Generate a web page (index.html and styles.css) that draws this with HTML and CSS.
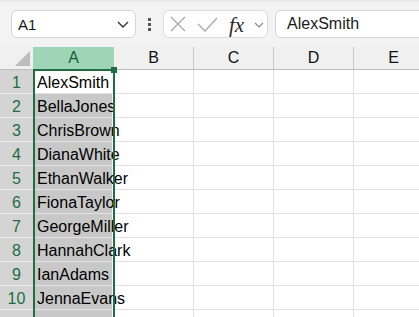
FILE: index.html
```html
<!DOCTYPE html>
<html>
<head>
<meta charset="utf-8">
<link rel="stylesheet" href="styles.css">
</head>
<body>
<div class="toolbar">
  <div class="namebox">
    <span class="nb-text">A1</span>
    <svg class="nb-chev" width="12" height="7" viewBox="0 0 12 7"><path d="M1 1 L6 6 L11 1" fill="none" stroke="#333" stroke-width="1.4"/></svg>
  </div>
  <div class="dots"><span></span><span></span><span></span></div>
  <div class="fbtns">
    <svg class="ic-x" width="16" height="16" viewBox="0 0 16 16"><path d="M1 1 L15 15 M15 1 L1 15" stroke="#ababab" stroke-width="1.4" fill="none"/></svg>
    <svg class="ic-ok" width="21" height="15" viewBox="0 0 21 15"><path d="M1 7 L8 14 L20 1" stroke="#ababab" stroke-width="1.4" fill="none"/></svg>
    <span class="fx">fx</span>
    <svg class="ic-chev" width="10" height="6" viewBox="0 0 10 6"><path d="M1 1 L5 5 L9 1" fill="none" stroke="#8a8a8a" stroke-width="1.2"/></svg>
  </div>
  <div class="finput">AlexSmith</div>
</div>
<div class="grid">
  <div class="row head">
    <div class="rh corner"><span class="tri"></span></div>
    <div class="ch ca">A</div>
    <div class="ch">B</div>
    <div class="ch">C</div>
    <div class="ch">D</div>
    <div class="ch">E</div>
  </div>
  <div class="row"><div class="rh">1</div><div class="c ca active">AlexSmith</div><div class="c"></div><div class="c"></div><div class="c"></div><div class="c"></div></div>
  <div class="row"><div class="rh">2</div><div class="c ca">BellaJones</div><div class="c"></div><div class="c"></div><div class="c"></div><div class="c"></div></div>
  <div class="row"><div class="rh">3</div><div class="c ca">ChrisBrown</div><div class="c"></div><div class="c"></div><div class="c"></div><div class="c"></div></div>
  <div class="row"><div class="rh">4</div><div class="c ca">DianaWhite</div><div class="c"></div><div class="c"></div><div class="c"></div><div class="c"></div></div>
  <div class="row"><div class="rh">5</div><div class="c ca">EthanWalker</div><div class="c"></div><div class="c"></div><div class="c"></div><div class="c"></div></div>
  <div class="row"><div class="rh">6</div><div class="c ca">FionaTaylor</div><div class="c"></div><div class="c"></div><div class="c"></div><div class="c"></div></div>
  <div class="row"><div class="rh">7</div><div class="c ca">GeorgeMiller</div><div class="c"></div><div class="c"></div><div class="c"></div><div class="c"></div></div>
  <div class="row"><div class="rh">8</div><div class="c ca">HannahClark</div><div class="c"></div><div class="c"></div><div class="c"></div><div class="c"></div></div>
  <div class="row"><div class="rh">9</div><div class="c ca">IanAdams</div><div class="c"></div><div class="c"></div><div class="c"></div><div class="c"></div></div>
  <div class="row"><div class="rh">10</div><div class="c ca">JennaEvans</div><div class="c"></div><div class="c"></div><div class="c"></div><div class="c"></div></div>
  <div class="row short"><div class="rh"></div><div class="c ca"></div><div class="c"></div><div class="c"></div><div class="c"></div><div class="c"></div></div>
  <div class="selection"></div>
  <div class="handle"></div>
</div>
</body>
</html>
```
FILE: styles.css
```css
* { box-sizing: border-box; }
html, body { margin: 0; padding: 0; }
body {
  width: 419px;
  height: 317px;
  overflow: hidden;
  background: #ffffff;
  font-family: "Liberation Sans", Arial, sans-serif;
  color: #000;
}
.toolbar {
  height: 47px;
  background: #f3f3f3;
  border-top: 2px solid #e9e9e9;
  padding-top: 8px;
  display: flex;
  align-items: flex-start;
  overflow: hidden;
}
.namebox {
  margin-left: 11px;
  width: 125px;
  height: 28px;
  background: #fff;
  border: 1px solid #d6d6d6;
  border-radius: 6px;
  display: flex;
  align-items: center;
  padding-left: 6px;
  padding-right: 6px;
}
.nb-text { font-size: 15px; flex: 1; color: #1a1a1a; }
.nb-chev { display: block; }
.dots {
  width: 27px;
  height: 28px;
  display: flex;
  flex-direction: column;
  align-items: center;
  justify-content: center;
  gap: 2px;
}
.dots span { width: 3px; height: 3px; background: #555; display: block; }
.fbtns {
  width: 105px;
  height: 28px;
  background: #fff;
  border: 1px solid #dcdcdc;
  border-radius: 6px;
  display: flex;
  align-items: center;
}
.ic-x { margin-left: 6px; display: block; }
.ic-ok { margin-left: 11px; display: block; margin-top: 1px; }
.fx {
  margin-left: 11px;
  width: 20px;
  font-family: "Liberation Serif", "Times New Roman", serif;
  font-style: italic;
  font-size: 21px;
  color: #2a2a2a;
  line-height: 20px;
  margin-top: 1px;
}
.ic-chev { margin-left: 5px; display: block; margin-top: 2px; }
.finput {
  margin-left: 7px;
  flex: 1;
  margin-right: -30px;
  height: 28px;
  background: #fff;
  border: 1px solid #d6d6d6;
  border-radius: 6px;
  padding-left: 11px;
  font-size: 16px;
  line-height: 26px;
  color: #1a1a1a;
}
.grid { position: relative; width: 433px; height: 270px; overflow: hidden; }
.row { display: flex; height: 24px; border-bottom: 1px solid #e1e1e1; }
.row.short { height: 10px; }
.row.head { height: 23px; background: #f0f0f0; border-bottom: 1px solid #bdbdbd; }
.rh {
  width: 33px;
  flex: none;
  background: #d4d4d4;
  color: #1d6d40;
  font-size: 16px;
  text-align: center;
  padding-top: 3px;
  line-height: 20px;
  border-bottom: 1px solid #ebebeb;
  margin-bottom: -1px;
}
.rh.corner {
  background: #f0f0f0;
  border-bottom: none;
  margin-bottom: 0;
  position: relative;
}
.tri {
  position: absolute;
  right: 3px;
  bottom: 3px;
  width: 0;
  height: 0;
  border-left: 15px solid transparent;
  border-bottom: 15px solid #bcbcbc;
}
.ch {
  width: 80px;
  flex: none;
  text-align: center;
  font-size: 16px;
  line-height: 22px;
  border-right: 1px solid #c8c8c8;
  color: #111;
}
.ch.ca { width: 81px; background: #9fd5b7; color: #0f5f33; border-right: none; }
.c {
  width: 80px;
  flex: none;
  border-right: 1px solid #e1e1e1;
  font-size: 16px;
  padding-left: 4px;
  padding-top: 3px;
  line-height: 19px;
  white-space: nowrap;
  overflow: visible;
}
.c.ca { width: 81px; background: #c8c8c8; border-right: none; box-shadow: inset -2px 0 0 #ffffff; }
.c.ca.active { background: #ffffff; }
.selection {
  position: absolute;
  left: 33px;
  top: 22px;
  width: 82px;
  height: 260px;
  border: 2px solid #1e6e42;
}
.handle {
  position: absolute;
  left: 111px;
  top: 20px;
  width: 6px;
  height: 6px;
  background: #1e6e42;
}
```
